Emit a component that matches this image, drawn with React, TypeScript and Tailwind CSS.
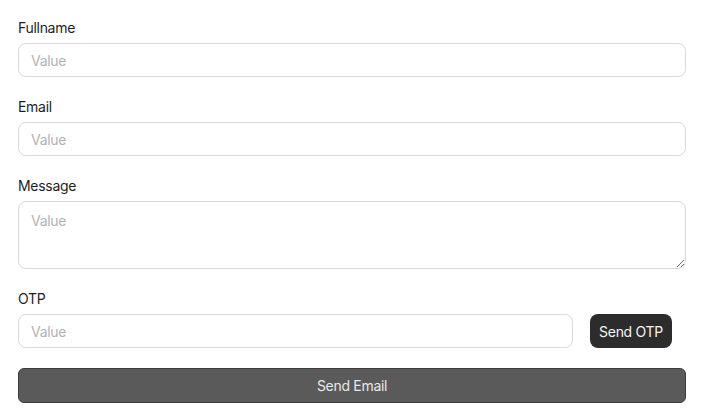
import React from 'react'

function Field({ label, children }: { label: string; children: React.ReactNode }) {
  return (
    <div className="flex flex-col gap-[6px]">
      <label className="text-[14px] leading-[19px] tracking-[-0.3px] text-[#1e1e1e]">{label}</label>
      {children}
    </div>
  )
}

const inputCls =
  'h-[34px] w-full rounded-[8px] border border-[#d9d9d9] bg-white px-3 text-[14px] tracking-[-0.3px] text-[#1e1e1e] placeholder:text-[#b3b3b3] outline-none'

export default function App() {
  return (
    <div
      className="min-h-[419px] w-[703px] bg-white px-[18px] pt-[18px]"
      style={{ fontFamily: 'Inter, "Noto Sans", sans-serif' }}
    >
      <form className="flex w-[668px] flex-col gap-[20px]" onSubmit={e => e.preventDefault()}>
        <Field label="Fullname">
          <input className={inputCls} placeholder="Value" />
        </Field>
        <Field label="Email">
          <input className={inputCls} placeholder="Value" />
        </Field>
        <Field label="Message">
          <textarea
            className="block h-[68px] w-full rounded-[8px] border border-[#d9d9d9] bg-white px-3 py-[10px] text-[14px] leading-[18px] tracking-[-0.3px] text-[#1e1e1e] placeholder:text-[#b3b3b3] outline-none"
            placeholder="Value"
          />
        </Field>
        <Field label="OTP">
          <div className="flex items-center gap-[17px]">
            <input className={inputCls + ' !w-[555px]'} placeholder="Value" />
            <button
              type="button"
              className="h-[34px] w-[82px] rounded-[8px] bg-[#2c2c2c] text-[14px] tracking-[-0.3px] text-[#f5f5f5]"
            >
              Send OTP
            </button>
          </div>
        </Field>
        <button
          type="submit"
          className="h-[35px] w-full rounded-[6px] border border-[#3d3d3d] bg-[#5a5a5a] text-[14px] tracking-[-0.3px] text-[#e8e8e8]"
        >
          Send Email
        </button>
      </form>
    </div>
  )
}
